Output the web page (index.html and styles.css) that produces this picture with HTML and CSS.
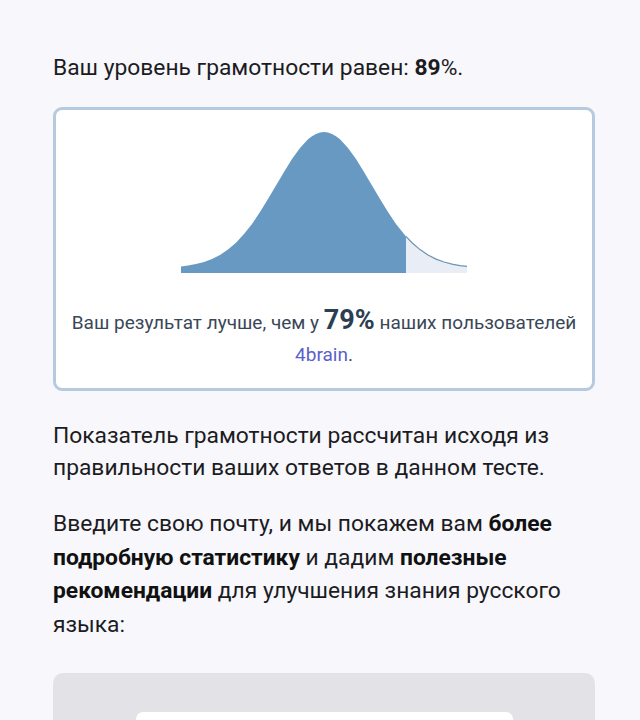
FILE: index.html
```html
<!DOCTYPE html>
<html lang="ru">
<head>
<meta charset="utf-8">
<link rel="stylesheet" href="styles.css">
</head>
<body>
<main class="page">
  <p class="level">Ваш уровень грамотности равен: <b>89</b>%.</p>
  <section class="card">
    <svg class="curve" width="286" height="141" viewBox="0 0 286 141">
      <path class="fill-main" d="M0,141 L0,134.4 L7,133.6 L15,132.1 L23,130 L31,127.1 L39,123 L47,117.6 L55,110.7 L63,102.1 L71,91.9 L79,80.1 L87,67.1 L95,53.5 L103,39.9 L111,27.1 L119,16 L127,7.3 L131,4.3 L135,1.9 L139,0.5 L143,0 L147,0.5 L151,1.9 L155,4.3 L159,7.3 L167,16 L175,27.1 L183,39.9 L191,53.5 L199,67.1 L207,80.1 L215,91.9 L223,102.1 L225,104.4 L225,141 Z"/>
      <path class="fill-rest" d="M225,141 L225,104.4 L231,110.7 L239,117.6 L247,123 L255,127.1 L263,130 L271,132.1 L279,133.6 L286,134.4 L286,141 Z"/>
      <path class="edge" d="M225,104.4 L231,110.7 L239,117.6 L247,123 L255,127.1 L263,130 L271,132.1 L279,133.6 L286,134.4"/>
    </svg>
    <p class="result">Ваш результат лучше, чем у <strong>79%</strong> наших пользователей <a class="brand" href="#">4brain</a>.</p>
  </section>
  <p class="text">Показатель грамотности рассчитан исходя из правильности ваших ответов в данном тесте.</p>
  <p class="text">Введите свою почту, и мы покажем вам <b>более подробную статистику</b> и дадим <b>полезные рекомендации</b> для улучшения знания русского языка:</p>
  <div class="form-box">
    <div class="form-inner"></div>
  </div>
</main>
</body>
</html>
```

FILE: styles.css
```css
html, body {
  margin: 0;
  padding: 0;
  background: #f7f7fc;
}
body {
  font-family: Roboto, "Noto Sans", sans-serif;
  color: #1c1c1f;
}
.page {
  padding: 52px 45px 0 53px;
}
.level {
  margin: 0;
  font-size: 22.8px;
  line-height: 32px;
}
.level b {
  font-weight: 700;
}
.card {
  margin-top: 23px;
  background: #ffffff;
  border: 3px solid #b5cade;
  border-radius: 9px;
  padding: 22px 12px 17px;
  display: flex;
  flex-direction: column;
  align-items: center;
}
.curve {
  display: block;
}
.fill-main {
  fill: #6899c2;
}
.fill-rest {
  fill: #e9eef6;
}
.edge {
  fill: none;
  stroke: #6e92b6;
  stroke-width: 1.2;
}
.result {
  margin: 31px 0 0;
  text-align: center;
  font-size: 19px;
  line-height: 32px;
  color: #3a4757;
}
.result strong {
  font-size: 27px;
  font-weight: 700;
  color: #2c3e52;
}
.brand {
  color: #5c5fcb;
  text-decoration: none;
}
.text {
  margin: 29px 0 0;
  font-size: 22.8px;
  line-height: 32px;
}
.text + .text {
  margin-top: 23px;
  line-height: 33.5px;
}
.text b {
  font-weight: 700;
  color: #111;
}
.form-box {
  margin-top: 32px;
  background: #e3e2e7;
  border-radius: 10px;
  height: 120px;
  padding-top: 39px;
  display: flex;
  justify-content: center;
  box-sizing: border-box;
}
.form-inner {
  width: 377px;
  height: 60px;
  background: #ffffff;
  border-radius: 7px;
}
```
